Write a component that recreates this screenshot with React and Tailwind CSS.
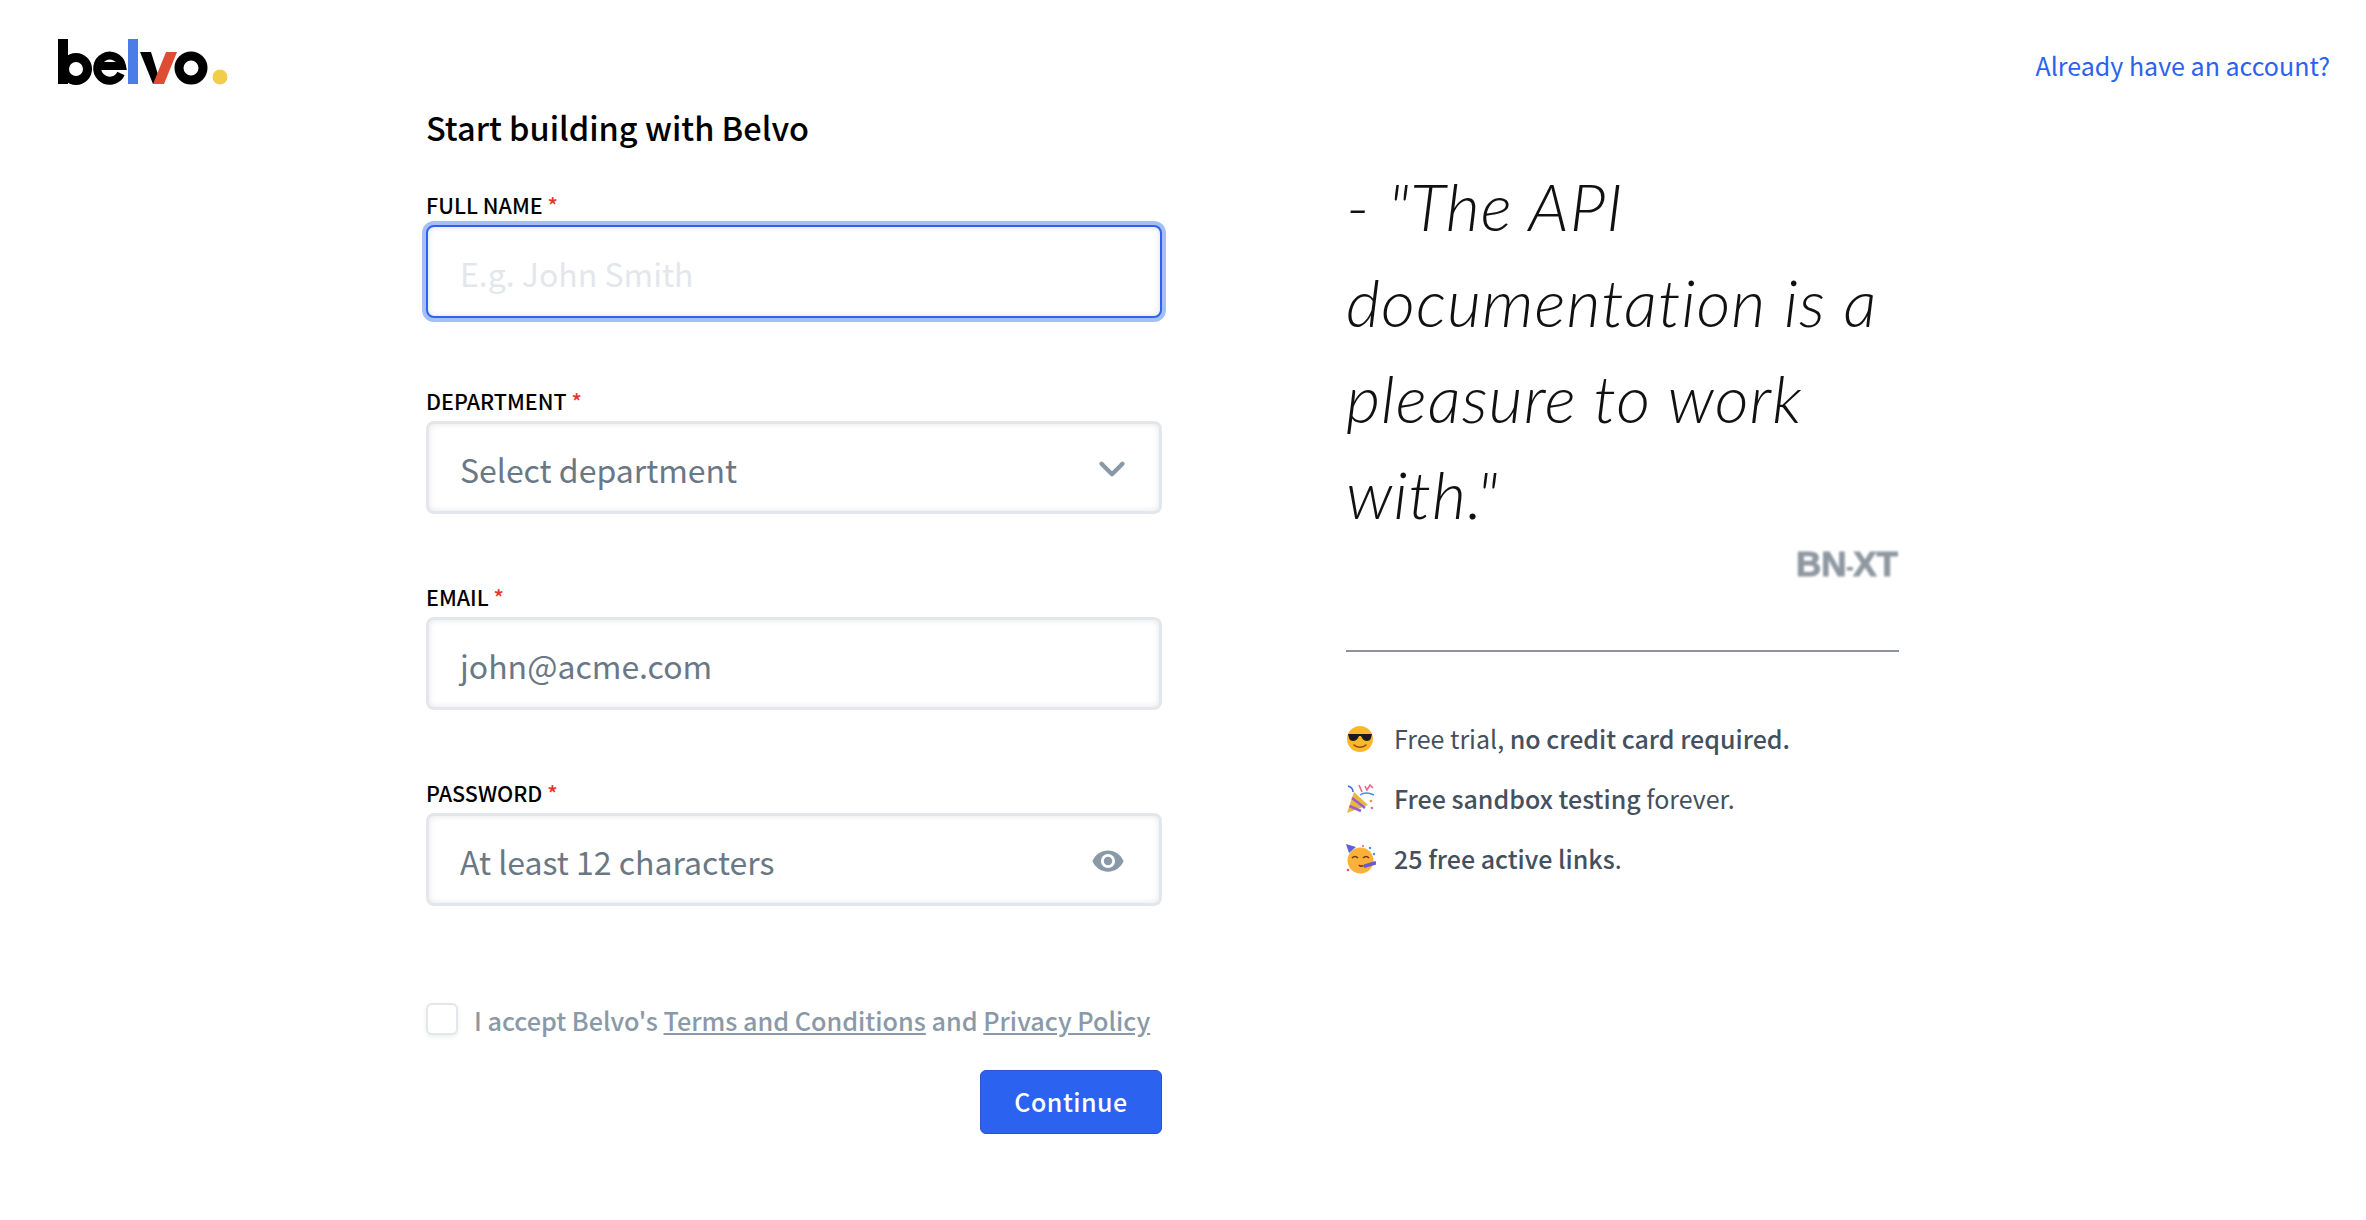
import { ChevronDown } from 'lucide-react';

const FONT = "font-['Noto_Sans_CJK_SC','Source_Sans_Pro',sans-serif]";

function BelvoLogo() {
  return (
    <svg width="174" height="50" viewBox="0 0 174 50" className="block">
      {/* b */}
      <rect x="0" y="1" width="10" height="45" fill="#000" />
      <circle cx="18" cy="31" r="11.5" fill="none" stroke="#000" strokeWidth="9" />
      {/* e */}
      <path d="M63 35.5A12.5 12.5 0 1 1 64 28H42" fill="none" stroke="#000" strokeWidth="8" />
      {/* l */}
      <rect x="70" y="1" width="10" height="45" fill="#4a7de8" />
      {/* v */}
      <path d="M82 14H93L103 46H95Z" fill="#000" />
      <path d="M108 14H119L106 46H95Z" fill="#dd4c33" />
      {/* o */}
      <circle cx="133" cy="30" r="12" fill="none" stroke="#000" strokeWidth="9" />
      {/* dot */}
      <circle cx="162" cy="39" r="7.5" fill="#f2cd4a" />
    </svg>
  );
}

function Field({ label, children, focused }) {
  return (
    <div className="h-[196px]">
      <label className="block text-[21.5px] leading-[30px] font-medium text-black mb-[5px]">
        {label} <span className="text-[#e5352b]">*</span>
      </label>
      <div
        className={
          focused
            ? 'h-[93px] rounded-[8px] border-2 border-[#2b62ef] ring-[4px] ring-[#a3bff5] shadow-[inset_0_0_6px_rgba(30,40,60,0.15)] bg-white flex items-center pl-[32px] pr-[32px] pt-[2px]'
            : 'h-[93px] rounded-[8px] border-[3px] border-[#e3e6ea] shadow-[inset_0_0_6px_rgba(30,40,60,0.12)] bg-white flex items-center justify-between pl-[31px] pr-[31px] pt-[2px]'
        }
      >
        {children}
      </div>
    </div>
  );
}

function SunglassesEmoji() {
  return (
    <svg width="28" height="28" viewBox="0 0 28 28">
      <circle cx="14" cy="14" r="13" fill="#fbb72c" />
      <path d="M2 9H26L25 13C24 17 18 17 16 13L15 11H13L12 13C10 17 4 17 3 13Z" fill="#1b1b1f" />
      <path d="M8 20C11 23 17 23 20 20" fill="none" stroke="#8a4b10" strokeWidth="1.6" strokeLinecap="round" />
    </svg>
  );
}

function PartyEmoji() {
  return (
    <svg width="30" height="30" viewBox="0 0 30 30">
      <path d="M1 29L8 8L22 21Z" fill="#e9b73d" />
      <path d="M3.5 22L15 27M6 14L19 24" stroke="#9a5fd0" strokeWidth="2.6" />
      <path d="M14 11C18 8 24 9 28 11" stroke="#3f8fe8" strokeWidth="1.5" fill="none" />
      <path d="M13 1L16 8M19 2L21 6L24 1L27 4" stroke="#e86a8c" strokeWidth="1.6" fill="none" />
      <path d="M2 2C5 3 7 5 7 8" stroke="#3f6fe8" strokeWidth="1.6" fill="none" />
      <circle cx="25" cy="17" r="1.3" fill="#e8924a" />
      <circle cx="26" cy="24" r="1.3" fill="#e86a8c" />
    </svg>
  );
}

function PartyFaceEmoji() {
  return (
    <svg width="30" height="30" viewBox="0 0 30 30">
      <circle cx="14.5" cy="16.5" r="13" fill="#fbb03a" />
      <path d="M0 0L10 3L3 9Z" fill="#5a63d8" />
      <path d="M6 14C8 12 10 12 12 14M17 14C19 12 21 12 23 14" stroke="#6b3a10" strokeWidth="1.6" fill="none" />
      <path d="M19 22L29 19" stroke="#6a5ad0" strokeWidth="3.5" strokeLinecap="round" />
      <path d="M13 21C14 22.5 15.5 22.5 17 21.5" stroke="#6b3a10" strokeWidth="1.6" fill="none" />
      <circle cx="2" cy="26" r="1.3" fill="#e8527a" />
      <circle cx="24" cy="4" r="1.2" fill="#3f8fe8" />
      <circle cx="28" cy="10" r="1.2" fill="#3f8fe8" />
      <circle cx="17" cy="2" r="1" fill="#e8527a" />
    </svg>
  );
}

function Bullet({ icon, children }) {
  return (
    <div className="h-[60px] flex items-center text-[25px] text-[#44505e]">
      <span className="w-[48px] flex items-center shrink-0">{icon}</span>
      <span>{children}</span>
    </div>
  );
}

export default function App() {
  return (
    <div className={`${FONT} w-[2366px] h-[1220px] bg-white overflow-hidden flex flex-col`}>
      <header className="h-[108px] flex justify-between pl-[58px] pr-[36px] pt-[38px] shrink-0">
        <BelvoLogo />
        <a className="text-[25px] leading-[58px] -mt-[2px] text-[#2b62ef]">Already have an account?</a>
      </header>

      <main className="flex pl-[426px]">
        <section className="w-[736px] shrink-0">
          <h1 className="text-[32.5px] leading-[42px] font-medium text-black mt-[-2px] mb-[42px]">Start building with Belvo</h1>

          <Field label="FULL NAME" focused>
            <span className="text-[32px] text-[#e3e7ec]">E.g. John Smith</span>
          </Field>
          <Field label="DEPARTMENT">
            <span className="text-[32px] text-[#6a7785]">Select department</span>
            <ChevronDown size={42} strokeWidth={2.5} className="text-[#8a99a8] mr-[-5px]" />
          </Field>
          <Field label="EMAIL">
            <span className="text-[32px] text-[#6a7785]">john@acme.com</span>
          </Field>
          <Field label="PASSWORD">
            <span className="text-[32px] text-[#6a7785]">At least 12 characters</span>
            <svg width="34" height="34" viewBox="0 0 24 24" fill="#8a99a8" className="mr-[3px]">
              <path d="M12 4.5C7 4.5 2.7 7.6 1 12c1.7 4.4 6 7.5 11 7.5s9.3-3.1 11-7.5c-1.7-4.4-6-7.5-11-7.5zM12 17a5 5 0 1 1 0-10 5 5 0 0 1 0 10zm0-8a3 3 0 1 0 0 6 3 3 0 0 0 0-6z" />
            </svg>
          </Field>

          <div className="flex items-center mt-[27px] h-[36px]">
            <span className="w-[32px] h-[32px] rounded-[6px] border-2 border-[#e3e6ea] shadow-[0_2px_4px_rgba(30,40,60,0.08)] bg-white shrink-0" />
            <span className="ml-[16px] text-[25.2px] font-medium text-[#8a99a8] mt-[3px] whitespace-nowrap">
              I accept Belvo's <a className="underline">Terms and Conditions</a> and <a className="underline">Privacy Policy</a>
            </span>
          </div>

          <div className="flex justify-end mt-[33px]">
            <button className="w-[182px] h-[64px] rounded-[6px] bg-[#2b62ef] border border-[#2a54c8] text-white text-[25px] font-medium tracking-[0.5px]">
              Continue
            </button>
          </div>
        </section>

        <aside className="w-[553px] ml-[184px] shrink-0 pt-[50px]">
          <p className="font-['Lato',sans-serif] font-light italic text-[66px] tracking-[1px] leading-[96px] text-[#111]">
            - "The API documentation is a pleasure to work with."
          </p>
          <div className="flex justify-end mt-[5px] pr-[1px]">
            <span className="font-['Liberation_Sans',sans-serif] font-bold text-[35px] leading-[34px] text-[#8f98a1] [-webkit-text-stroke:1px_#8f98a1] blur-[1px]">
              BN<span className="text-[20px] align-[2px]">-</span>XT
            </span>
          </div>
          <div className="border-t-2 border-[#8d939a] mt-[66px] mb-[57px]" />
          <Bullet icon={<SunglassesEmoji />}>
            Free trial, <b className="font-medium">no credit card required.</b>
          </Bullet>
          <Bullet icon={<PartyEmoji />}>
            <b className="font-medium">Free sandbox testing</b> forever.
          </Bullet>
          <Bullet icon={<PartyFaceEmoji />}>
            <b className="font-medium">25 free active links</b>.
          </Bullet>
        </aside>
      </main>
    </div>
  );
}
